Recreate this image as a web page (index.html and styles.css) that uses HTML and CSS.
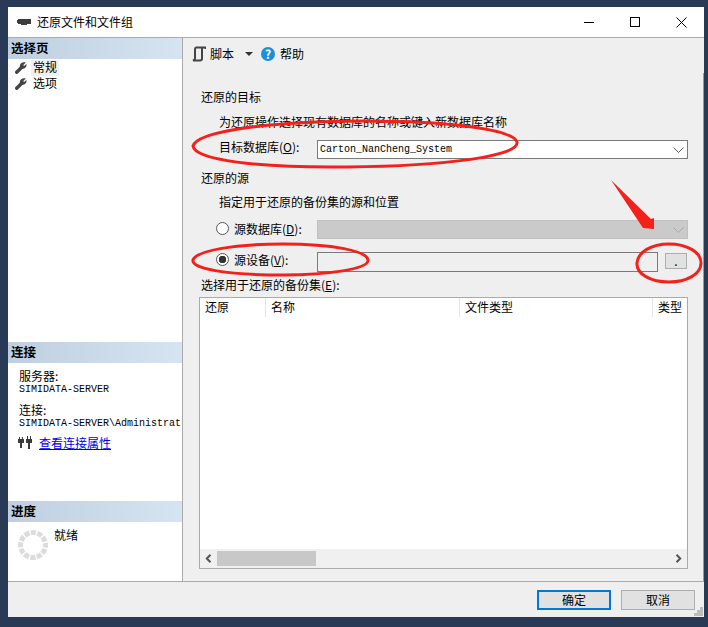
FILE: index.html
```html
<!DOCTYPE html>
<html lang="zh-CN">
<head>
    <meta charset="UTF-8">
    <title>还原文件和文件组</title>
    <link rel="stylesheet" href="styles.css">
</head>
<body>
    <div class="window">
        <div class="titlebar">
            <svg class="title-icon" width="14" height="6" viewBox="0 0 14 6"><path d="M0 1h1V0h13v5H10v1H4V5H1V4H0z" fill="#3c3c3c"/></svg>
            <span class="title-text">还原文件和文件组</span>
            <div class="win-buttons">
                <svg width="11" height="11" viewBox="0 0 11 11"><path d="M0 5.500h10" stroke="#000" fill="none"/></svg>
                <svg width="11" height="11" viewBox="0 0 11 11"><rect x="0.5" y="0.5" width="9" height="9" stroke="#000" fill="none"/></svg>
                <svg width="11" height="11" viewBox="0 0 11 11"><path d="M0.5 0.5l10 10M10.500 0.5l-10 10" stroke="#000" fill="none"/></svg>
            </div>
        </div>

        <div class="main">
            <div class="sidebar">
                <div class="side-section pages">
                    <div class="side-head">选择页</div>
                    <div class="page-item">
                        <svg class="wrench" width="12" height="12" viewBox="0 0 12 12"><path d="M1.700 10.300L6.500 5.500" stroke="#444" stroke-width="3.400" stroke-linecap="round"/><path d="M10.800 .6L8.300 3 9 4 11.500 2C12 5 9.500 7.500 6.500 6.800L5 5.500C4 2 7.500 -.5 10.800 .6z" fill="#444"/></svg>
                        <span class="page-label selected">常规</span>
                    </div>
                    <div class="page-item">
                        <svg class="wrench" width="12" height="12" viewBox="0 0 12 12"><path d="M1.700 10.300L6.500 5.500" stroke="#444" stroke-width="3.400" stroke-linecap="round"/><path d="M10.800 .6L8.300 3 9 4 11.500 2C12 5 9.500 7.500 6.500 6.800L5 5.500C4 2 7.500 -.5 10.800 .6z" fill="#444"/></svg>
                        <span class="page-label">选项</span>
                    </div>
                </div>

                <div class="side-section connection">
                    <div class="side-head">连接</div>
                    <div class="conn-body">
                        <div class="conn-label">服务器:</div>
                        <div class="conn-value">SIMIDATA-SERVER</div>
                        <div class="conn-label second">连接:</div>
                        <div class="conn-value">SIMIDATA-SERVER\Administrat</div>
                        <div class="conn-link">
                            <svg width="15" height="13" viewBox="0 0 15 13"><path d="M0 3h1V1h1v2h2V1h1v2h1v4H4v5H2V7H0zM8 3h1V0h1v3h2V0h1v3h1v4h-2v6h-2V7H8z" fill="#3a3a3a"/></svg>
                            <a href="#">查看连接属性</a>
                        </div>
                    </div>
                </div>

                <div class="side-section progress">
                    <div class="side-head">进度</div>
                    <div class="progress-body">
                        <svg width="30" height="30" viewBox="0 0 30 30"><circle cx="15" cy="15" r="12.500" fill="none" stroke="#dcdcdc" stroke-width="5" stroke-dasharray="5.200 1.345" stroke-dashoffset="2.600"/></svg>
                        <span>就绪</span>
                    </div>
                </div>
            </div>

            <div class="pane">
                <div class="toolbar">
                    <svg class="script-icon" width="14" height="16" viewBox="0 0 14 16"><path d="M4 1.500h9.500V3M4 1.500c-.8.300-1 1-1 2v9c0 1-.5 1.500-2 2h7c1.200 0 2-.8 2-2V2" stroke="#444" stroke-width="2" fill="none"/></svg>
                    <span class="script-text">脚本</span>
                    <svg class="caret" width="8" height="4" viewBox="0 0 8 4"><path d="M0 0h8L4 4z" fill="#333"/></svg>
                    <span class="help-icon">?</span>
                    <span class="help-text">帮助</span>
                </div>

                <div class="form">
                    <div class="line">还原的目标</div>
                    <div class="line indent desc-1">为还原操作选择现有数据库的名称或键入新数据库名称</div>
                    <div class="field target-row">
                        <span class="field-label target-label">目标数据库(<u>O</u>):</span>
                        <div class="combo">
                            <span class="combo-value">Carton_NanCheng_System</span>
                            <svg width="11" height="6" viewBox="0 0 11 6"><path d="M.5 .5l5 5 5-5" stroke="#555" fill="none"/></svg>
                        </div>
                    </div>
                    <div class="line source-title">还原的源</div>
                    <div class="line indent desc-2">指定用于还原的备份集的源和位置</div>
                    <div class="field radio-row-1">
                        <span class="radio"></span>
                        <span class="field-label radio-label">源数据库(<u>D</u>):</span>
                        <div class="combo disabled">
                            <span class="combo-value"></span>
                            <svg width="11" height="6" viewBox="0 0 11 6"><path d="M.5 .5l5 5 5-5" stroke="#aaa" fill="none"/></svg>
                        </div>
                    </div>
                    <div class="field radio-row-2">
                        <span class="radio checked"></span>
                        <span class="field-label radio-label">源设备(<u>V</u>):</span>
                        <div class="device-input"></div>
                        <div class="browse-btn">.</div>
                    </div>
                    <div class="line sets-label">选择用于还原的备份集(<u>E</u>):</div>

                    <div class="table">
                        <div class="table-head">
                            <div class="col">还原</div>
                            <div class="col">名称</div>
                            <div class="col">文件类型</div>
                            <div class="col">类型</div>
                        </div>
                        <div class="table-body"></div>
                        <div class="hscroll">
                            <svg class="arrow" width="7" height="9" viewBox="0 0 7 9"><path d="M5.500 .8L1.800 4.500l3.700 3.700" stroke="#555" stroke-width="2" fill="none"/></svg>
                            <div class="thumb"></div>
                            <svg class="arrow end" width="7" height="9" viewBox="0 0 7 9"><path d="M1.500 .8l3.700 3.700-3.700 3.700" stroke="#555" stroke-width="2" fill="none"/></svg>
                        </div>
                    </div>
                </div>
            </div>
        </div>

        <div class="footer">
            <div class="btn primary">确定</div>
            <div class="btn">取消</div>
            <svg class="grip" width="9" height="9" viewBox="0 0 9 9"><path d="M6 0h3v3H6zM3 3h3v3H3zM6 3h3v3H6zM0 6h3v3H0zM3 6h3v3H3zM6 6h3v3H6z" fill="#bdbdbd"/></svg>
        </div>
    </div>

    <!-- red marks drawn on top of the screenshot -->
    <svg class="marks" width="708" height="627" viewBox="0 0 708 627">
        <g fill="none" stroke="#f4211a" stroke-width="3">
            <path d="M193 146c4-13 60-24 170-25 90 0 150 9 154 21 3 14-70 24-170 25-90 1-152-7-154-21z"/>
            <path d="M193 260c3-9 40-16 90-16 50 0 84 7 85 16 1 9-40 15-85 15-55 0-92-6-90-15z"/>
            <path d="M637 263c1-11 14-19 32-19 18 0 32 8 32 19 0 11-14 19-32 19-18 0-33-8-32-19z"/>
        </g>
        <path d="M611 180L651 219 654 218V229L643 228z" fill="#f4211a"/>
    </svg>
</body>
</html>
```

FILE: styles.css
```css
* {
    box-sizing: border-box;
}
html, body {
    height: 100%;
}
body {
    margin: 0;
    background-color: #293a57;
    font-family: "Noto Sans CJK SC", "Liberation Sans", sans-serif;
    font-size: 12px;
    color: #000;
    overflow: hidden;
}
.window {
    display: flex;
    flex-direction: column;
    width: 696px;
    height: 610px;
    margin: 7px 0 0 8px;
    background-color: #efefef;
}
.titlebar {
    display: flex;
    align-items: center;
    height: 31px;
    flex: none;
    background: #fff;
    border-bottom: 1px solid #aaa;
}
.title-icon {
    margin-left: 9px;
}
.title-text {
    margin-left: 6px;
    margin-bottom: 2px;
}
.win-buttons {
    display: flex;
    margin-left: auto;
    margin-right: 17px;
    gap: 35px;
}
.main {
    display: flex;
    flex: 1;
    min-height: 0;
}

/* left side */
.sidebar {
    display: flex;
    flex-direction: column;
    width: 175px;
    flex: none;
    background: #fff;
    border-right: 1px solid #aaa;
}
.side-section {
    overflow: hidden;
}
.pages {
    height: 304px;
}
.connection {
    height: 159px;
}
.progress {
    height: 80px;
}
.side-head {
    height: 21px;
    line-height: 19px;
    padding-left: 3px;
    font-weight: bold;
    font-size: 12.500px;
    background: linear-gradient(to right, #bfcfdf, #d6e4f2);
}
.page-item {
    display: flex;
    align-items: center;
    height: 16px;
    padding-left: 7px;
}
.page-item:nth-child(2) {
    margin-top: 1px;
}
.page-label {
    margin-left: 4px;
    padding: 0 2px;
    line-height: 14px;
    height: 16px;
}
.page-label.selected {
    background: #f0f0f0;
}
.conn-body {
    padding: 6px 0 0 11px;
}
.conn-label {
    height: 14px;
    line-height: 14px;
}
.conn-label.second {
    margin-top: 7px;
}
.conn-value {
    height: 12px;
    margin-top: 1px;
    line-height: 12px;
    font-family: "Liberation Mono", monospace;
    font-size: 10px;
    white-space: nowrap;
}
.conn-link {
    display: flex;
    align-items: center;
    gap: 6px;
    margin-top: 4px;
    margin-left: -1px;
}
.conn-link a {
    color: #0000e6;
}
.progress-body {
    display: flex;
    align-items: flex-start;
    gap: 6px;
    padding: 8px 0 0 10px;
}
.progress-body span {
    line-height: 10px;
}

/* right side */
.pane {
    flex: 1;
    min-width: 0;
    background: linear-gradient(#9a9a9a, #9a9a9a) right 35px / 1px 100% no-repeat #efefef;
}
.toolbar {
    display: flex;
    align-items: center;
    height: 32px;
    padding-left: 9px;
}
.script-text {
    margin-left: 4px;
    margin-bottom: 2px;
}
.caret {
    margin-left: 11px;
}
.help-icon {
    width: 14px;
    height: 14px;
    margin-left: 8px;
    border-radius: 50%;
    background: #1b8fdc;
    color: #fff;
    font-weight: bold;
    font-size: 12px;
    line-height: 14px;
    text-align: center;
}
.help-text {
    margin-left: 5px;
    margin-bottom: 2px;
}
.form {
    padding: 17px 0 0 18px;
}
.line {
    height: 20px;
    line-height: 20px;
    white-space: nowrap;
}
.indent {
    padding-left: 18px;
}
.desc-1 {
    margin-top: 5px;
}
.field {
    display: flex;
    align-items: center;
}
.target-row {
    height: 19px;
    margin-top: 8px;
}
.source-title {
    margin-top: 9px;
}
.desc-2 {
    margin-top: 4px;
}
.radio-row-1 {
    height: 19px;
    margin-top: 8px;
}
.radio-row-2 {
    height: 20px;
    margin-top: 13px;
}
.sets-label {
    margin-top: 3px;
}
.field-label u {
    text-underline-offset: 1px;
}
.target-label {
    width: 116px;
    margin-bottom: 6px;
    padding-left: 18px;
}
.radio {
    width: 13px;
    height: 13px;
    flex: none;
    margin-left: 15px;
    margin-bottom: 2px;
    border: 1px solid #555;
    border-radius: 50%;
    background: #fff;
}
.radio.checked {
    margin-bottom: 6px;
    background: radial-gradient(circle, #333 0 3.500px, #fff 4px);
}
.radio-label {
    width: 88px;
    margin-bottom: 3px;
    padding-left: 5px;
}
.radio-row-2 .radio-label {
    margin-bottom: 6px;
}
.combo {
    display: flex;
    align-items: center;
    justify-content: space-between;
    width: 371px;
    height: 19px;
    padding: 0 2px;
    padding-right: 3px;
    background: #fff;
    border: 1px solid #7a7a7a;
}
.combo-value {
    font-family: "Liberation Mono", monospace;
    font-size: 10px;
}
.combo.disabled {
    background: #cacaca;
    border-color: #c0c0c0;
}
.device-input {
    width: 341px;
    height: 20px;
    border: 1px solid #7a7a7a;
    background: #efefef;
}
.browse-btn {
    width: 22px;
    height: 16px;
    margin-left: 7px;
    margin-bottom: 3px;
    border: 1px solid #adadad;
    background: #e1e1e1;
    text-align: center;
    line-height: 14px;
}
.table {
    display: flex;
    flex-direction: column;
    width: 489px;
    height: 272px;
    margin: 2px 0 0 -2px;
    border: 1px solid #aaa;
    background: #fff;
}
.table-head {
    display: grid;
    grid-template-columns: 66px 194px 193px 1fr;
    height: 19px;
    flex: none;
}
.col {
    padding-left: 5px;
    line-height: 17px;
    border-right: 1px solid #e5e5e5;
}
.col:last-child {
    border-right: none;
}
.table-body {
    flex: 1;
}
.hscroll {
    display: flex;
    align-items: center;
    height: 19px;
    flex: none;
    background: #f0f0f0;
}
.arrow {
    margin-left: 5px;
}
.arrow.end {
    margin-left: auto;
    margin-right: 5px;
}
.thumb {
    width: 99px;
    height: 15px;
    margin-left: 5px;
    background: #c8c8c8;
}

/* bottom buttons */
.footer {
    position: relative;
    display: flex;
    justify-content: flex-end;
    gap: 10px;
    height: 36px;
    flex: none;
    padding: 8px 9px 0 0;
    border-top: 1px solid #aaa;
}
.btn {
    width: 74px;
    height: 20px;
    border: 1px solid #adadad;
    background: #e1e1e1;
    text-align: center;
    line-height: 18px;
}
.btn.primary {
    border: 2px solid #0078d7;
    line-height: 16px;
}
.grip {
    position: absolute;
    right: 1px;
    bottom: 1px;
}
.marks {
    position: absolute;
    left: 0;
    top: 0;
    pointer-events: none;
}
```
